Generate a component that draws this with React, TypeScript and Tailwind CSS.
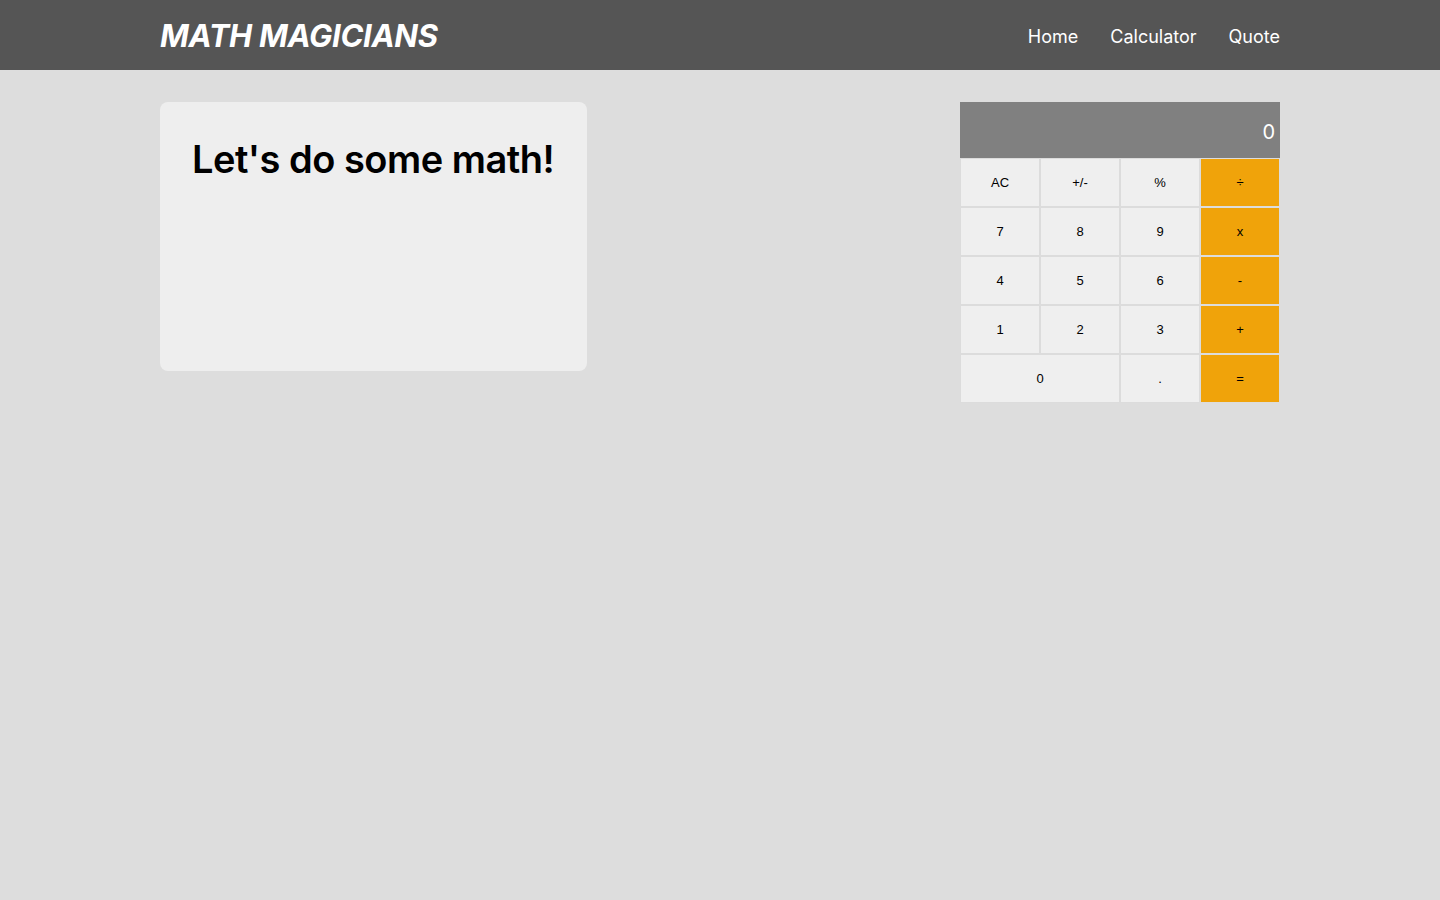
const keys: { label: string; op?: boolean; wide?: boolean }[] = [
  { label: 'AC' }, { label: '+/-' }, { label: '%' }, { label: '÷', op: true },
  { label: '7' }, { label: '8' }, { label: '9' }, { label: 'x', op: true },
  { label: '4' }, { label: '5' }, { label: '6' }, { label: '-', op: true },
  { label: '1' }, { label: '2' }, { label: '3' }, { label: '+', op: true },
  { label: '0', wide: true }, { label: '.' }, { label: '=', op: true },
];

function Calculator() {
  return (
    <div className="w-[320px]">
      <div className="h-[56px] bg-[#808080] text-white text-[20px] flex items-center justify-end pr-[5px] pt-[4px] font-['Inter',sans-serif]">
        0
      </div>
      <div className="grid grid-cols-4 bg-[#dddddd]">
        {keys.map((k) => (
          <button
            key={k.label}
            className={`h-[49px] border border-[#dcdcdc] text-[13px] text-black font-['Liberation_Sans',Arial,sans-serif] ${
              k.wide ? 'col-span-2' : ''
            } ${k.op ? 'bg-[#f0a30a]' : 'bg-[#efefef]'}`}
          >
            {k.label}
          </button>
        ))}
      </div>
    </div>
  );
}

export default function App() {
  return (
    <div className="min-h-screen w-full bg-[#dddddd] font-['Inter',sans-serif]">
      <header className="h-[70px] bg-[#555555] px-[160px] flex items-center justify-between">
        <h1 className="text-white text-[31px] font-bold italic tracking-[-0.3px] pt-[2px]">MATH MAGICIANS</h1>
        <nav className="flex items-center gap-8 text-white text-[18px] pt-[2px]">
          <a href="#">Home</a>
          <a href="#">Calculator</a>
          <a href="#">Quote</a>
        </nav>
      </header>

      <main className="px-[160px] pt-[32px] flex items-start justify-between">
        <div className="w-[427px] h-[269px] bg-[#eeeeee] rounded-lg px-[32px] pt-[33px]">
          <h2 className="text-[38px] font-semibold text-black leading-[48px] tracking-[-0.5px] whitespace-nowrap">Let's do some math!</h2>
        </div>
        <Calculator />
      </main>
    </div>
  );
}
